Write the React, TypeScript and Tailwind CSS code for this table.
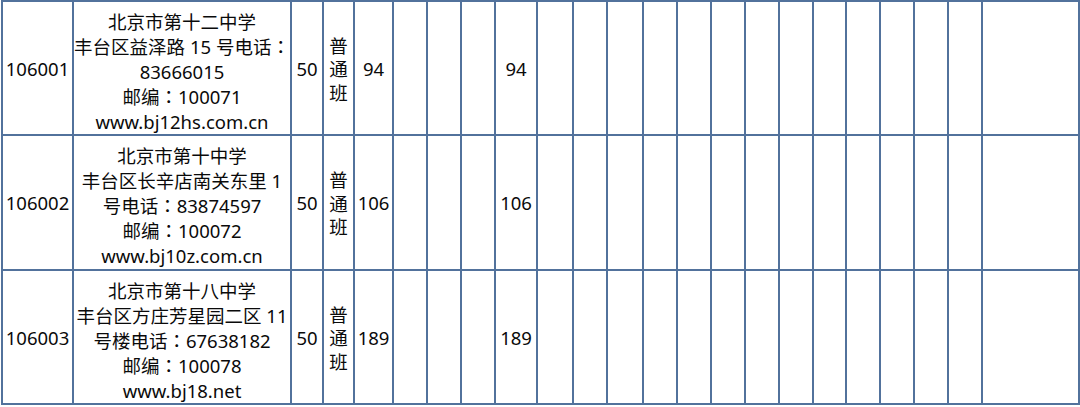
import React from "react";

const rows = [
  {
    code: "106001",
    lines: ["北京市第十二中学", "丰台区益泽路 15 号电话：", "83666015", "邮编：100071", "www.bj12hs.com.cn"],
    n: "94",
  },
  {
    code: "106002",
    lines: ["北京市第十中学", "丰台区长辛店南关东里 1", "号电话：83874597", "邮编：100072", "www.bj10z.com.cn"],
    n: "106",
  },
  {
    code: "106003",
    lines: ["北京市第十八中学", "丰台区方庄芳星园二区 11", "号楼电话：67638182", "邮编：100078", "www.bj18.net"],
    n: "189",
  },
];

const cell = "border-r-2 border-b-2 border-[#52729c] flex flex-col items-center justify-center text-center";

function Line({ text }: { text: string }) {
  const parts = text.split("：");
  return (
    <div className="whitespace-nowrap">
      {parts.map((p, i) => (
        <React.Fragment key={i}>
          {p}
          {i < parts.length - 1 && (
            <span style={{ fontFamily: '"Noto Sans CJK TC", sans-serif' }}>：</span>
          )}
        </React.Fragment>
      ))}
    </div>
  );
}

export default function App() {
  return (
    <div className="w-[1080px] h-[407px] bg-white overflow-hidden pl-[1px]">
      <div
        className="grid grid-cols-[71px_218px_32px_31px_39px_34px_34px_34px_42px_36px_34px_36px_34px_34px_34px_34px_34px_33px_34px_34px_34px_34px_97px] grid-rows-[134px_135px_134px] border-l-2 border-t-2 border-[#52729c] w-[1079px] text-[18.5px] leading-[25px] text-[#0a0a0a]"
        style={{ fontFamily: '"Noto Sans", "Noto Sans CJK SC", sans-serif' }}
      >
        {rows.map((r) => (
          <React.Fragment key={r.code}>
            <div className={cell}>{r.code}</div>
            <div className={cell + " pt-[6px]"}>
              {r.lines.map((l, i) => (
                <Line key={i} text={l} />
              ))}
            </div>
            <div className={cell}>50</div>
            <div className={cell + " leading-[23.5px] pt-[2px]"}>
              <div>普</div>
              <div>通</div>
              <div>班</div>
            </div>
            <div className={cell}>{r.n}</div>
            <div className={cell}></div>
            <div className={cell}></div>
            <div className={cell}></div>
            <div className={cell}>{r.n}</div>
            {Array.from({ length: 14 }).map((_, i) => (
              <div key={i} className={cell}></div>
            ))}
          </React.Fragment>
        ))}
      </div>
    </div>
  );
}
